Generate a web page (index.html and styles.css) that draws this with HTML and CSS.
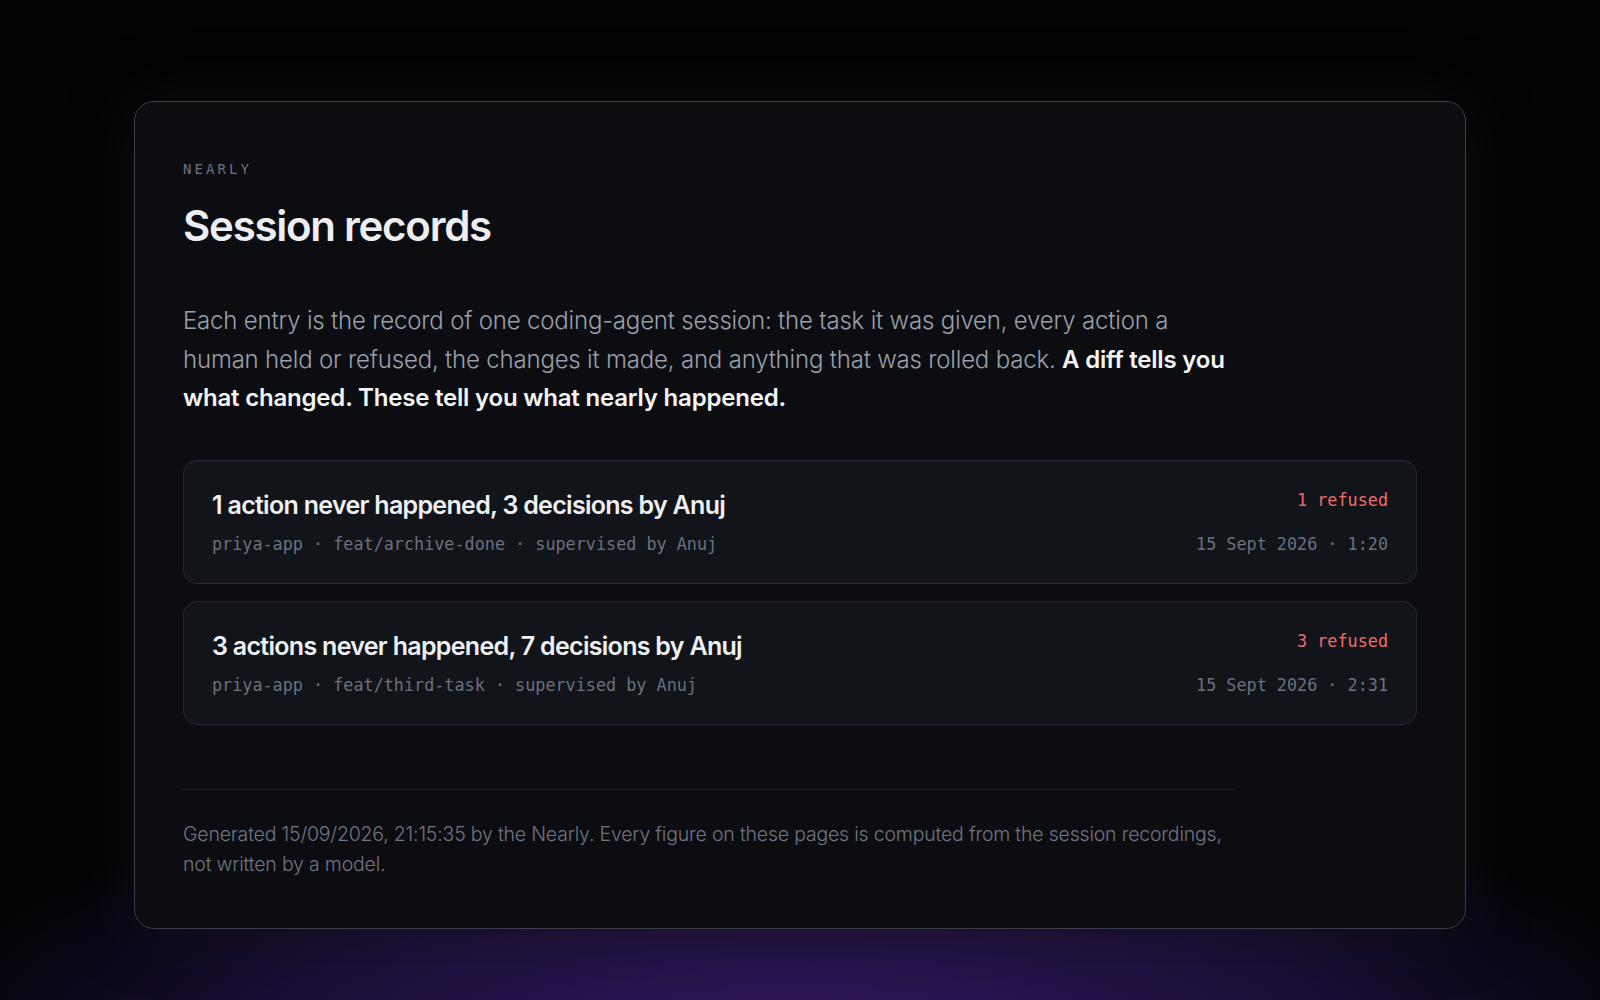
FILE: index.html
```html
<!DOCTYPE html>
<html lang="en">
<head>
<meta charset="utf-8">
<title>Session records</title>
<link rel="stylesheet" href="styles.css">
</head>
<body>
<main class="page">
  <section class="panel">
    <div class="eyebrow">NEARLY</div>
    <h1 class="title">Session records</h1>
    <p class="lede">Each entry is the record of one coding-agent session: the task it was given, every action a human held or refused, the changes it made, and anything that was rolled back. <strong>A diff tells you what changed. These tell you what nearly happened.</strong></p>
    <ul class="sessions">
      <li class="session">
        <div class="session-main">
          <div class="session-title">1 action never happened, 3 decisions by Anuj</div>
          <div class="session-meta">priya-app · feat/archive-done · supervised by Anuj</div>
        </div>
        <div class="session-side">
          <div class="refused">1 refused</div>
          <div class="session-meta">15 Sept 2026 · 1:20</div>
        </div>
      </li>
      <li class="session">
        <div class="session-main">
          <div class="session-title">3 actions never happened, 7 decisions by Anuj</div>
          <div class="session-meta">priya-app · feat/third-task · supervised by Anuj</div>
        </div>
        <div class="session-side">
          <div class="refused">3 refused</div>
          <div class="session-meta">15 Sept 2026 · 2:31</div>
        </div>
      </li>
    </ul>
    <footer class="foot">Generated 15/09/2026, 21:15:35 by the Nearly. Every figure on these pages is computed from the session recordings, not written by a model.</footer>
  </section>
</main>
</body>
</html>
```
FILE: styles.css
```css
* { box-sizing: border-box; }
html, body { margin: 0; padding: 0; }
body {
  min-height: 1000px;
  background:
    radial-gradient(ellipse 900px 300px at 50% 1060px, #321b5e 0%, #28154e 30%, #1a0e36 60%, rgba(8, 5, 14, 0) 100%),
    #030305;
  font-family: Inter, "Noto Sans", sans-serif;
  color: #e8eaee;
}
.page {
  padding-top: 101px;
  display: flex;
  justify-content: center;
}
.panel {
  width: 1332px;
  height: 828px;
  background: #0b0d11;
  border: 1.5px solid #3b3e46;
  border-radius: 20px;
  padding: 59px 48px 48px 48px;
  box-shadow: 0 0 60px rgba(20, 20, 26, 0.6);
}
.eyebrow {
  font-family: "DejaVu Sans Mono", "Liberation Mono", monospace;
  font-size: 14px;
  letter-spacing: 0.22em;
  color: #6c7283;
  line-height: 16px;
}
.title {
  margin: 23px 0 0 0;
  font-size: 42px;
  line-height: 52px;
  font-weight: 600;
  letter-spacing: -0.03em;
  color: #eceef2;
}
.lede {
  margin: 50px 0 0 0;
  max-width: 1050px;
  font-size: 24px;
  line-height: 38.5px;
  font-weight: 300;
  color: #9aa0ab;
  letter-spacing: -0.008em;
}
.lede strong {
  font-weight: 600;
  color: #f4f5f7;
}
.sessions {
  list-style: none;
  margin: 42px 0 0 0;
  padding: 0;
  display: flex;
  flex-direction: column;
  gap: 17px;
}
.session {
  height: 124px;
  background: #111419;
  border: 1px solid #252931;
  border-radius: 14px;
  padding: 28px 28px 0 28px;
  display: flex;
  justify-content: space-between;
}
.session-main, .session-side {
  display: flex;
  flex-direction: column;
}
.session-side { align-items: flex-end; }
.session-title {
  font-size: 25px;
  line-height: 32px;
  font-weight: 600;
  letter-spacing: -0.028em;
  color: #eef0f3;
}
.session-meta {
  margin-top: 12px;
  font-family: "DejaVu Sans Mono", "Liberation Mono", monospace;
  font-size: 16.8px;
  line-height: 22px;
  color: #6b7180;
}
.refused {
  font-family: "DejaVu Sans Mono", "Liberation Mono", monospace;
  font-size: 16.8px;
  line-height: 22px;
  font-weight: 400;
  color: #f26b6b;
}
.session-side .session-meta { margin-top: 22px; }
.foot {
  margin-top: 64px;
  max-width: 1050px;
  border-top: 1px solid #23262d;
  padding-top: 29px;
  font-size: 19.5px;
  line-height: 30px;
  font-weight: 300;
  color: #6f7582;
  letter-spacing: -0.01em;
}
```
